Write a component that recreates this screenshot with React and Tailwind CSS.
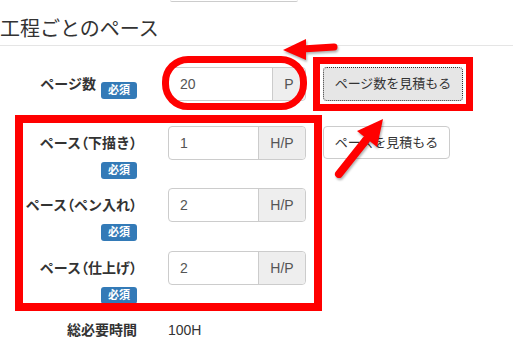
import React from 'react';

const FONT = { fontFamily: '"Liberation Sans", "Noto Sans CJK JP", sans-serif' };

const Badge = () => (
  <span className="inline-flex h-[17px] w-[36px] items-center justify-center rounded-[3px] bg-[#337ab7] text-[11px] font-bold leading-none text-white">
    必須
  </span>
);

// brackets rendered with proportional widths, as in the original font
const Paren = ({ children }) => <span className="[font-feature-settings:'palt']">{children}</span>;

const InputGroup = ({ value, unit, addonW }) => (
  <div className="flex h-[34px] w-[138px] shrink-0 rounded-[4px] border border-[#ccc] bg-white">
    <div className="flex flex-1 items-center pl-[11px] text-[14px] text-[#555]">{value}</div>
    <div
      className={`flex items-center justify-center rounded-r-[4px] border-l border-[#ccc] bg-[#eee] text-[14px] text-[#555] ${addonW}`}
    >
      {unit}
    </div>
  </div>
);

const PaceRow = ({ name, value, height, button }) => (
  <div className={`flex ${height}`}>
    <div className="flex w-[137px] shrink-0 flex-col items-end pt-[7px]">
      <div className="whitespace-nowrap text-[14px] font-bold leading-[20px] text-[#333]">
        ペース<Paren>（</Paren>
        {name}
        <Paren>）</Paren>
      </div>
      <div className="mt-[4px]">
        <Badge />
      </div>
    </div>
    <div className="ml-[31px]">
      <InputGroup value={value} unit="H/P" addonW="w-[47px]" />
    </div>
    {button && (
      <button className="ml-[17px] h-[33px] w-[127px] rounded-[4px] border border-[#ccc] bg-white text-[13px] text-[#333]">
        {button}
      </button>
    )}
  </div>
);

export default function App() {
  return (
    <div className="relative h-[360px] w-[513px] overflow-hidden bg-white" style={FONT}>
      {/* bottom edge of the field above */}
      <div className="ml-[170px] h-[2px] w-[128px] rounded-b-[3px] border-b border-[#ccc]" />

      <div className="border-b border-[#e5e5e5] pb-[2px] pt-[13px]">
        <h2 className="text-[20px] font-normal leading-[28px] text-[#333]">工程ごとのペース</h2>
      </div>

      <div className="mt-[21px]">
        {/* page count */}
        <div className="flex h-[59px]">
          <div className="flex w-[137px] shrink-0 items-start justify-end gap-[5px] pt-[7px]">
            <span className="text-[14px] font-bold leading-[20px] text-[#333]">ページ数</span>
            <span className="mt-[3px]">
              <Badge />
            </span>
          </div>
          <div className="ml-[31px]">
            <InputGroup value="20" unit="P" addonW="w-[33px]" />
          </div>
          <button className="ml-[17px] h-[34px] w-[140px] rounded-[4px] border border-dotted border-[#333] bg-[#e6e6e6] text-[13px] text-[#333]">
            ページ数を見積もる
          </button>
        </div>

        <PaceRow name="下描き" value="1" height="h-[62px]" button="ペースを見積もる" />
        <PaceRow name="ペン入れ" value="2" height="h-[63px]" />
        <PaceRow name="仕上げ" value="2" height="h-[62px]" />

        <div className="flex pt-[7px]">
          <div className="w-[137px] shrink-0 text-right text-[14px] font-bold leading-[20px] text-[#333]">総必要時間</div>
          <div className="ml-[31px] text-[14px] leading-[20px] text-[#333]">100H</div>
        </div>
      </div>

      {/* annotations */}
      <div className="pointer-events-none absolute left-[162px] top-[56px] h-[54px] w-[145px] rounded-[26px] border-[7px] border-[#ff0000]" />
      <div className="pointer-events-none absolute left-[313px] top-[57px] h-[54px] w-[160px] border-[7px] border-[#ff0000]" />
      <div className="pointer-events-none absolute left-[15px] top-[115px] h-[196px] w-[307px] border-[8px] border-[#ff0000]" />

      <svg
        className="pointer-events-none absolute left-0 top-0"
        width="513"
        height="360"
        style={{ filter: 'drop-shadow(1px 2px 1px rgba(0,0,0,0.3))' }}
      >
        <line x1="334" y1="47" x2="302" y2="49" stroke="#ff0000" strokeWidth="7" strokeLinecap="round" />
        <polygon points="283,50 306,39 306,60" fill="#ff0000" />
        <line x1="339" y1="174" x2="366" y2="140" stroke="#ff0000" strokeWidth="8" strokeLinecap="round" />
        <polygon points="383,119 357,131 377,147" fill="#ff0000" />
      </svg>
    </div>
  );
}
